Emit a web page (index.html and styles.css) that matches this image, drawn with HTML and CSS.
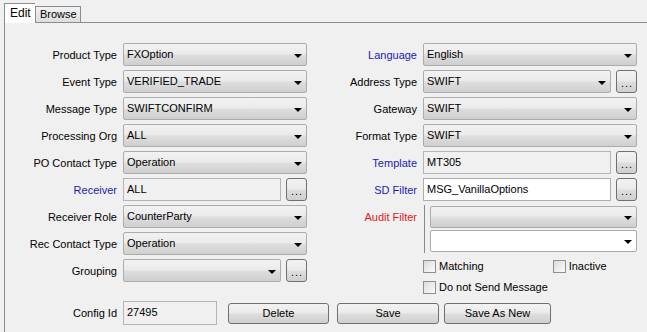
FILE: index.html
```html
<!DOCTYPE html>
<html lang="en">
<head>
    <meta charset="UTF-8">
    <title>Message Config</title>
    <link rel="stylesheet" href="styles.css">
</head>
<body>
    <div class="abas">
        <div class="aba ativa">Edit</div>
        <div class="aba">Browse</div>
    </div>

    <div class="painel">
        <div class="colunas">
            <div class="coluna esquerda">
                <div class="linha"><span class="rotulo">Product Type</span><div class="combo">FXOption</div></div>
                <div class="linha"><span class="rotulo">Event Type</span><div class="combo">VERIFIED_TRADE</div></div>
                <div class="linha"><span class="rotulo">Message Type</span><div class="combo">SWIFTCONFIRM</div></div>
                <div class="linha"><span class="rotulo">Processing Org</span><div class="combo">ALL</div></div>
                <div class="linha"><span class="rotulo">PO Contact Type</span><div class="combo">Operation</div></div>
                <div class="linha"><span class="rotulo azul">Receiver</span><div class="campo">ALL</div><div class="botao-mais">...</div></div>
                <div class="linha"><span class="rotulo">Receiver Role</span><div class="combo">CounterParty</div></div>
                <div class="linha"><span class="rotulo">Rec Contact Type</span><div class="combo">Operation</div></div>
                <div class="linha"><span class="rotulo">Grouping</span><div class="combo"></div><div class="botao-mais">...</div></div>
            </div>

            <div class="coluna direita">
                <div class="linha"><span class="rotulo azul">Language</span><div class="combo">English</div></div>
                <div class="linha"><span class="rotulo">Address Type</span><div class="combo">SWIFT</div><div class="botao-mais">...</div></div>
                <div class="linha"><span class="rotulo">Gateway</span><div class="combo">SWIFT</div></div>
                <div class="linha"><span class="rotulo">Format Type</span><div class="combo">SWIFT</div></div>
                <div class="linha"><span class="rotulo azul">Template</span><div class="campo">MT305</div><div class="botao-mais">...</div></div>
                <div class="linha"><span class="rotulo azul">SD Filter</span><div class="campo branco">MSG_VanillaOptions</div><div class="botao-mais">...</div></div>
                <div class="linha-audit">
                    <span class="rotulo vermelho">Audit Filter</span>
                    <div class="grupo-audit">
                        <div class="combo"></div>
                        <div class="combo branco"></div>
                    </div>
                </div>
                <div class="linha-check">
                    <label class="check"><span class="caixa"></span>Matching</label>
                    <label class="check inativo"><span class="caixa"></span>Inactive</label>
                </div>
                <div class="linha-check">
                    <label class="check"><span class="caixa"></span>Do not Send Message</label>
                </div>
            </div>
        </div>

        <div class="rodape">
            <span class="rotulo">Config Id</span>
            <div class="campo curto">27495</div>
            <div class="botoes">
                <div class="botao delete">Delete</div>
                <div class="botao save">Save</div>
                <div class="botao save-new">Save As New</div>
            </div>
        </div>
    </div>
</body>
</html>
```

FILE: styles.css
```css
body {
    margin: 0;
    background-color: #f0f0f0;
    font-family: "Liberation Sans", Arial, sans-serif;
    font-size: 11px;
    color: #000;
    height: 332px;
    overflow: hidden;
}

/* Abas */
.abas {
    display: flex;
    align-items: flex-end;
    margin: 3px 0 0 4px;
    height: 19px;
}

.aba {
    height: 15px;
    line-height: 15px;
    padding: 0 3px 0 4px;
    border: 1px solid #898c95;
    border-bottom: none;
    background: linear-gradient(#f2f2f2, #dedede);
}

.aba.ativa {
    height: 19px;
    line-height: 18px;
    width: 20px;
    padding: 0 5px 0 5px;
    background: #fff;
    border-right: none;
    position: relative;
    z-index: 1;
    margin-bottom: -1px;
    font-size: 12px;
}

/* Painel */
.painel {
    box-sizing: border-box;
    margin-left: 4px;
    border-top: 1px solid #898c95;
    border-left: 1px solid #898c95;
    height: 310px;
    padding-top: 20px;
}

.colunas {
    display: flex;
}

.coluna {
    display: flex;
    flex-direction: column;
    gap: 4px;
}

.linha {
    display: flex;
    align-items: center;
    height: 23px;
}

.rotulo {
    text-align: right;
    padding-right: 6px;
    flex-shrink: 0;
}

.esquerda .rotulo,
.rodape .rotulo {
    width: 112px;
}

.esquerda .combo,
.esquerda .campo {
    width: 184px;
}

.direita {
    margin-left: 10px;
}

.direita .rotulo {
    width: 100px;
}

.direita .linha > .combo,
.direita .linha > .campo {
    width: 214px;
}

.linha .botao-mais {
    margin-left: 5px;
}

.linha > .combo:not(:last-child),
.linha > .campo:not(:last-child) {
    width: 158px;
}

.direita .linha > .combo:not(:last-child),
.direita .linha > .campo:not(:last-child) {
    width: 188px;
}

.azul {
    color: #1c1cb4;
}

.vermelho {
    color: #e01818;
}

/* Combos */
.combo {
    box-sizing: border-box;
    height: 23px;
    line-height: 21px;
    padding-left: 3px;
    border: 1px solid #acacac;
    border-radius: 2px;
    background: linear-gradient(#f2f2f2 0%, #ebebeb 45%, #dddddd 55%, #cfcfcf 100%);
    position: relative;
    white-space: nowrap;
}

.combo::after {
    content: "";
    position: absolute;
    right: 4px;
    top: 10px;
    border-left: 4px solid transparent;
    border-right: 4px solid transparent;
    border-top: 4px solid #000;
}

.grupo-audit .combo::after {
    top: 9px;
}

.combo.branco {
    background: #fff;
}

.campo {
    box-sizing: border-box;
    height: 23px;
    line-height: 21px;
    padding-left: 3px;
    border: 1px solid #b5b5b5;
    background-color: #f0f0f0;
}

.campo.branco {
    background-color: #fff;
    border-color: #abadb3;
}

.botao-mais {
    box-sizing: border-box;
    width: 21px;
    height: 23px;
    border: 1px solid #707070;
    border-radius: 3px;
    background: linear-gradient(#f2f2f2 0%, #ebebeb 45%, #dddddd 55%, #cfcfcf 100%);
    text-align: center;
    line-height: 21px;
    font-size: 11px;
    letter-spacing: 1px;
    padding: 2px 0 0 1px;
}

/* Audit filter */
.linha-audit {
    display: flex;
}

.linha-audit .rotulo {
    padding-top: 6px;
}

.grupo-audit {
    display: flex;
    flex-direction: column;
    gap: 2px;
    margin-left: 1px;
    border-left: 1px solid #8a8a8a;
    padding: 1px 0 1px 5px;
    width: 207px;
}

.grupo-audit .combo {
    height: 22px;
    line-height: 20px;
}

/* Checkboxes */
.linha-check {
    display: flex;
    height: 16px;
    align-items: center;
    margin-left: 106px;
    margin-top: 1px;
}

.check {
    display: flex;
    align-items: center;
    gap: 3px;
}

.inativo {
    margin-left: 69px;
}

.caixa {
    box-sizing: border-box;
    width: 13px;
    height: 13px;
    border: 1px solid #8e8f8f;
    background: linear-gradient(135deg, #dcdcdc, #fafafa);
}

/* Rodape */
.rodape {
    display: flex;
    align-items: center;
    margin-top: 6px;
}

.campo.curto {
    width: 94px;
    height: 24px;
}

.botoes {
    display: flex;
    margin-left: 11px;
}

.botao {
    box-sizing: border-box;
    height: 21px;
    line-height: 19px;
    text-align: center;
    border: 1px solid #707070;
    border-radius: 3px;
    background: linear-gradient(#f2f2f2 0%, #ebebeb 45%, #dddddd 55%, #cfcfcf 100%);
}

.delete {
    width: 101px;
}

.save {
    width: 102px;
    margin-left: 8px;
}

.save-new {
    width: 107px;
    margin-left: 5px;
}
```
